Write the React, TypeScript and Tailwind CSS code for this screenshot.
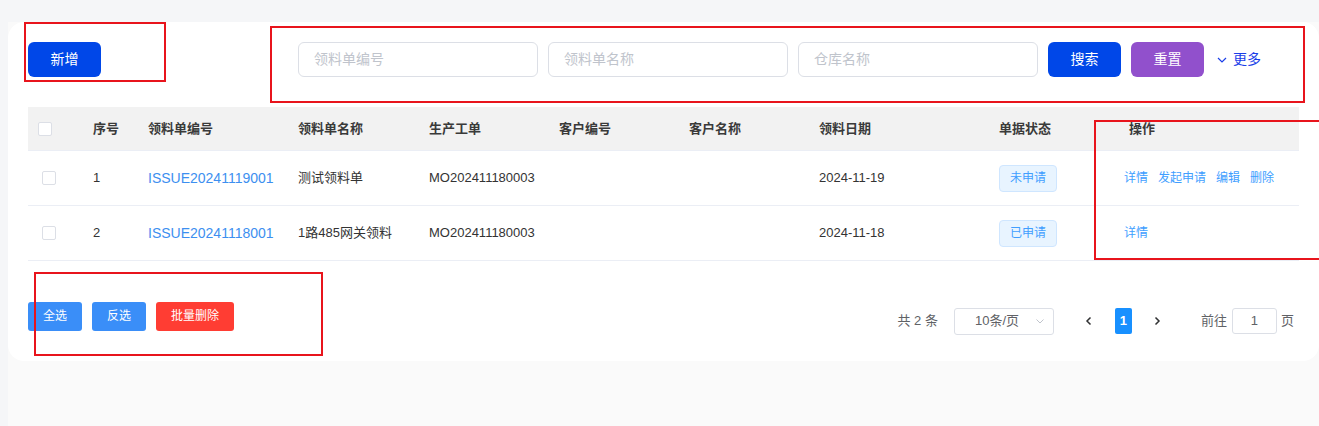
import React from "react";

const cols = [55, 55, 150, 131, 130, 130, 130, 180, 130, 180];

function Checkbox({ ml }: { ml: string }) {
  return <div className={`w-[14px] h-[14px] border border-[#dcdfe6] rounded-[2px] bg-white ${ml}`} />;
}

function Cell({ w, children, className = "" }: { w: number; children?: React.ReactNode; className?: string }) {
  return (
    <div style={{ width: w }} className={`flex items-center shrink-0 ${className}`}>
      {children}
    </div>
  );
}

const rows = [
  { no: "1", code: "ISSUE20241119001", name: "测试领料单", mo: "MO202411180003", date: "2024-11-19", status: "未申请", actions: ["详情", "发起申请", "编辑", "删除"] },
  { no: "2", code: "ISSUE20241118001", name: "1路485网关领料", mo: "MO202411180003", date: "2024-11-18", status: "已申请", actions: ["详情"] },
];

const headers = ["序号", "领料单编号", "领料单名称", "生产工单", "客户编号", "客户名称", "领料日期", "单据状态", "操作"];

export default function App() {
  return (
    <div
      className="relative w-[1319px] h-[426px] overflow-hidden bg-[#fafafa] flex flex-col"
      style={{ fontFamily: '"Liberation Sans", "Noto Sans CJK SC", sans-serif' }}
    >
      <div className="h-[22px] bg-[#f5f6f8] shrink-0" />
      <div className="flex flex-1">
        <div className="w-[8px] bg-[#f5f6f8] shrink-0" />
        <div className="flex-1 flex flex-col">
          <div className="bg-white rounded-[16px] h-[339px] pt-[20px] px-[20px]">
            {/* top bar */}
            <div className="flex items-center h-[35px]">
              <button className="w-[73px] h-[35px] rounded-[6px] bg-[#0047e8] text-white text-[14px]">新增</button>
              <div className="ml-[197px] flex items-center gap-[10px]">
                {["领料单编号", "领料单名称", "仓库名称"].map((p) => (
                  <div key={p} className="w-[240px] h-[35px] border border-[#dcdfe6] rounded-[6px] flex items-center pl-[15px] text-[14px] text-[#c0c4cc]">
                    {p}
                  </div>
                ))}
                <button className="w-[73px] h-[35px] rounded-[6px] bg-[#0047e8] text-white text-[14px]">搜索</button>
                <button className="w-[73px] h-[35px] rounded-[6px] bg-[#9150cc] text-white text-[14px]">重置</button>
                <div className="flex items-center ml-[2px] text-[14px] text-[#1a3ee8]">
                  <svg width="12" height="12" viewBox="0 0 12 12" className="mr-[5px]">
                    <path d="M2 4 L6 8 L10 4" fill="none" stroke="#1a3ee8" strokeWidth="1.2" />
                  </svg>
                  更多
                </div>
              </div>
            </div>
            {/* table */}
            <div className="mt-[30px] w-[1271px]">
              <div className="flex h-[44px] bg-[#f2f2f2] border-b border-[#ebeef5] text-[13px] font-bold text-[#3a3a3a]">
                <Cell w={cols[0]}>
                  <Checkbox ml="ml-[10px]" />
                </Cell>
                {headers.map((h, i) => (
                  <Cell key={h} w={cols[i + 1]} className="pl-[10px]">
                    {h}
                  </Cell>
                ))}
              </div>
              {rows.map((r) => (
                <div key={r.no} className="flex h-[55px] border-b border-[#ebeef5] text-[13px] text-[#333]">
                  <Cell w={cols[0]}>
                    <Checkbox ml="ml-[14px]" />
                  </Cell>
                  <Cell w={cols[1]} className="pl-[10px]">{r.no}</Cell>
                  <Cell w={cols[2]} className="pl-[10px] text-[14px] text-[#3d8ff0]">{r.code}</Cell>
                  <Cell w={cols[3]} className="pl-[10px]">{r.name}</Cell>
                  <Cell w={cols[4]} className="pl-[10px]">{r.mo}</Cell>
                  <Cell w={cols[5]} />
                  <Cell w={cols[6]} />
                  <Cell w={cols[7]} className="pl-[10px]">{r.date}</Cell>
                  <Cell w={cols[8]} className="pl-[10px]">
                    <span className="w-[58px] h-[27px] flex items-center justify-center rounded-[4px] bg-[#e8f4ff] border border-[#cfe6ff] text-[#409eff] text-[12px]">
                      {r.status}
                    </span>
                  </Cell>
                  <Cell w={cols[9]} className="pl-[5px] gap-[10px] text-[12px] text-[#409eff]">
                    {r.actions.map((a) => (
                      <span key={a}>{a}</span>
                    ))}
                  </Cell>
                </div>
              ))}
            </div>
            {/* footer */}
            <div className="flex items-center mt-[40px] h-[30px]">
              <div className="flex gap-[10px] text-[12px] text-white">
                <button className="w-[54px] h-[29px] rounded-[3px] bg-[#3a8ef8]">全选</button>
                <button className="w-[54px] h-[29px] rounded-[3px] bg-[#3a8ef8]">反选</button>
                <button className="w-[78px] h-[29px] rounded-[3px] bg-[#ff3d33]">批量删除</button>
              </div>
              <div className="ml-auto mr-[5px] flex items-center text-[13px] text-[#606266] mt-[10px]">
                <span>共 2 条</span>
                <div className="ml-[16px] w-[100px] h-[27px] border border-[#dcdfe6] rounded-[3px] flex items-center pl-[20px] pr-[8px] text-[#606266]">
                  <span>10条/页</span>
                  <svg width="10" height="10" viewBox="0 0 10 10" className="ml-auto">
                    <path d="M1.5 3.5 L5 7 L8.5 3.5" fill="none" stroke="#c0c4cc" strokeWidth="1" />
                  </svg>
                </div>
                <svg width="10" height="10" viewBox="0 0 10 10" className="ml-[30px]">
                  <path d="M6.5 1.5 L3 5 L6.5 8.5" fill="none" stroke="#303133" strokeWidth="1.5" />
                </svg>
                <div className="ml-[21px] w-[17px] h-[26px] bg-[#1890ff] rounded-[2px] text-white font-bold flex items-center justify-center">1</div>
                <svg width="10" height="10" viewBox="0 0 10 10" className="ml-[20px]">
                  <path d="M3.5 1.5 L7 5 L3.5 8.5" fill="none" stroke="#303133" strokeWidth="1.5" />
                </svg>
                <span className="ml-[39px]">前往</span>
                <div className="ml-[5px] w-[45px] h-[26px] border border-[#dcdfe6] rounded-[3px] flex items-center justify-center text-[#606266]">1</div>
                <span className="ml-[4px]">页</span>
              </div>
            </div>
          </div>
        </div>
      </div>

      {/* red annotation boxes */}
      <div className="absolute left-[24px] top-[22px] w-[142px] h-[60px] border-2 border-[#e8141c]" />
      <div className="absolute left-[270px] top-[26px] w-[1035px] h-[77px] border-2 border-[#e8141c]" />
      <div className="absolute left-[1094px] top-[120px] w-[240px] h-[140px] border-2 border-[#e8141c]" />
      <div className="absolute left-[34px] top-[272px] w-[289px] h-[84px] border-2 border-[#e8141c]" />
    </div>
  );
}
